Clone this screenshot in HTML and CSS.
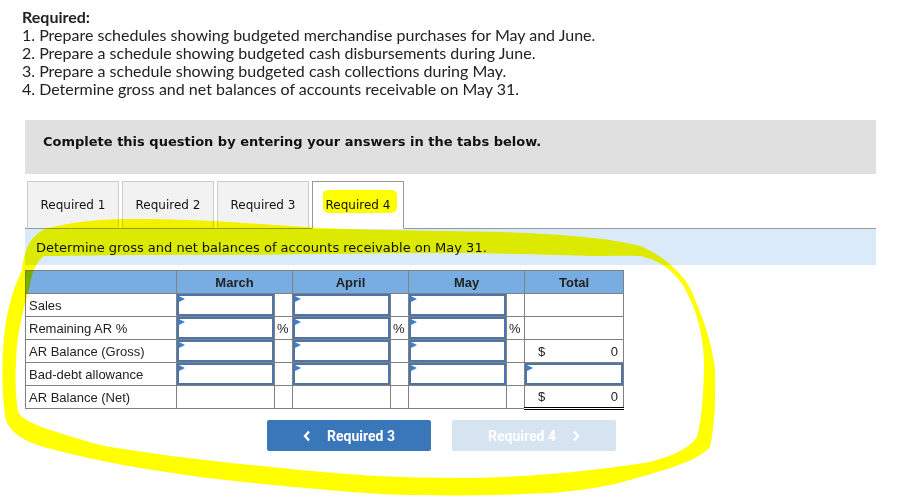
FILE: index.html
```html
<!DOCTYPE html>
<html lang="en">
  <head>
    <meta charset="UTF-8" />
    <title>Required 4</title>
    <link rel="stylesheet" href="styles.css">
  </head>
  <body>
    <div class="intro">
      <p class="intro-title">Required:</p>
      <p>1. Prepare schedules showing budgeted merchandise purchases for May and June.</p>
      <p>2. Prepare a schedule showing budgeted cash disbursements during June.</p>
      <p>3. Prepare a schedule showing budgeted cash collections during May.</p>
      <p>4. Determine gross and net balances of accounts receivable on May 31.</p>
    </div>

    <div class="question">
      <div class="notice">Complete this question by entering your answers in the tabs below.</div>

      <ul class="tabs">
        <li class="tab">Required 1</li>
        <li class="tab">Required 2</li>
        <li class="tab">Required 3</li>
        <li class="tab active">Required 4</li>
      </ul>

      <div class="prompt">Determine gross and net balances of accounts receivable on May 31.</div>

      <table class="ar-table">
        <colgroup>
          <col class="c-label" />
          <col class="c-input" /><col class="c-pct" />
          <col class="c-input" /><col class="c-pct" />
          <col class="c-input" /><col class="c-pct" />
          <col class="c-total" />
        </colgroup>
        <thead>
          <tr>
            <th></th>
            <th colspan="2">March</th>
            <th colspan="2">April</th>
            <th colspan="2">May</th>
            <th>Total</th>
          </tr>
        </thead>
        <tbody>
          <tr>
            <td class="label">Sales</td>
            <td class="entry"><span class="box"></span></td><td></td>
            <td class="entry"><span class="box"></span></td><td></td>
            <td class="entry"><span class="box"></span></td><td></td>
            <td></td>
          </tr>
          <tr>
            <td class="label">Remaining AR %</td>
            <td class="entry"><span class="box"></span></td><td class="pct">%</td>
            <td class="entry"><span class="box"></span></td><td class="pct">%</td>
            <td class="entry"><span class="box"></span></td><td class="pct">%</td>
            <td></td>
          </tr>
          <tr>
            <td class="label">AR Balance (Gross)</td>
            <td class="entry"><span class="box"></span></td><td></td>
            <td class="entry"><span class="box"></span></td><td></td>
            <td class="entry"><span class="box"></span></td><td></td>
            <td class="money"><span>$</span><span>0</span></td>
          </tr>
          <tr>
            <td class="label">Bad-debt allowance</td>
            <td class="entry"><span class="box"></span></td><td></td>
            <td class="entry"><span class="box"></span></td><td></td>
            <td class="entry"><span class="box"></span></td><td></td>
            <td class="entry"><span class="box"></span></td>
          </tr>
          <tr>
            <td class="label">AR Balance (Net)</td>
            <td></td><td></td>
            <td></td><td></td>
            <td></td><td></td>
            <td class="money net"><span>$</span><span>0</span></td>
          </tr>
        </tbody>
      </table>

      <div class="nav">
        <button class="nav-btn prev">
          <svg class="chev" width="8" height="12" viewBox="0 0 8 12"><polyline points="6,1.5 2,6 6,10.5" /></svg>
          Required 3
        </button>
        <button class="nav-btn next" disabled>
          Required 4
          <svg class="chev" width="8" height="12" viewBox="0 0 8 12"><polyline points="2,1.5 6,6 2,10.5" /></svg>
        </button>
      </div>
    </div>

    <!-- highlighter marks drawn over the page -->
    <svg class="marker" width="924" height="502" viewBox="0 0 924 502">
      <path d="M323 193 Q324 190 330 190 L392 190 Q398 191 397 197 L397 208 Q396 213 390 213 L330 213 Q323 213 323 207 Z" />
      <path fill-rule="evenodd" d="
        M22 270 C24 250 30 236 45 229 C70 222 100 219 130 219 C200 219 260 224 320 228
        C400 231 460 231 500 232 C560 234 610 238 640 246 C660 254 680 270 690 288
        C700 310 712 340 715 370 C716 400 714 430 710 447 C700 458 680 466 640 477
        C620 483 600 489 550 493 C480 496 420 496 380 494 C320 490 260 484 200 477
        C150 470 100 462 55 450 C30 444 12 436 6 420 C2 400 2 370 3 350 C5 320 10 295 22 270 Z
        M44 256 C36 262 32 272 30 285 C26 300 20 320 17 345 C15 370 15 395 18 412
        C24 422 40 428 100 445 C160 456 230 463 300 470 C350 475 400 478 460 478
        C530 478 600 470 650 462 C675 455 690 448 697 437 C702 420 704 390 704 360
        C703 335 697 310 684 287 C672 268 658 260 640 256 C620 255 600 257 560 255
        C500 253 450 253 400 253 C330 254 250 255 150 255 C100 255 70 256 44 256 Z" />
    </svg>
  </body>
</html>
```

FILE: styles.css
```css
* {
  box-sizing: border-box;
  margin: 0;
  padding: 0;
}

body {
  position: relative;
  width: 924px;
  height: 502px;
  overflow: hidden;
  background: #fff;
  font-family: "Lato", "Open Sans", sans-serif;
  color: #222;
}

.intro {
  padding: 8px 0 0 22px;
  font-size: 16px;
  line-height: 18px;
}

.intro-title {
  font-weight: bold;
}

.question {
  width: 851px;
  margin: 22px 0 0 25px;
  font-family: "DejaVu Sans", Verdana, sans-serif;
}

.notice {
  height: 54px;
  padding: 14px 0 0 18px;
  background: #e0e0e0;
  font-size: 13px;
  line-height: 16px;
  font-weight: bold;
  color: #111;
}

.tabs {
  display: flex;
  gap: 3px;
  list-style: none;
  margin-top: 7px;
  padding-left: 2px;
  border-bottom: 1px solid #999;
}

.tab {
  width: 92px;
  height: 48px;
  margin-bottom: -1px;
  display: flex;
  align-items: center;
  justify-content: center;
  background: #f2f2f2;
  border: 1px solid #ccc;
  border-bottom-color: #999;
  font-size: 12px;
  color: #111;
}

.tab.active {
  background: #fff;
  border-color: #999;
  border-bottom-color: #fff;
}

.prompt {
  height: 36px;
  padding-left: 11px;
  display: flex;
  align-items: center;
  background: #dbeaf8;
  font-size: 13px;
  color: #111;
}

.ar-table {
  margin-top: 5px;
  border-collapse: collapse;
  table-layout: fixed;
  width: 599px;
  font-family: "Liberation Sans", Arial, sans-serif;
  font-size: 13px;
  color: #222;
}

.c-label { width: 151px; }
.c-input { width: 98px; }
.c-pct { width: 18px; }
.c-total { width: 99px; }

.ar-table th,
.ar-table td {
  height: 23px;
  border: 1px solid #808080;
  padding: 0;
}

.ar-table th {
  background: #78ade3;
  font-weight: bold;
  color: #222;
}

.ar-table td.label {
  padding-left: 3px;
}

.ar-table td.pct {
  padding-left: 2px;
}

.entry {
  position: relative;
}

.box {
  position: absolute;
  inset: 0;
  border: 2px solid #4e74a8;
}

.box::before {
  content: "";
  position: absolute;
  left: 0;
  top: 0;
  border-left: 6px solid #3f7fcf;
  border-top: 3px solid transparent;
  border-bottom: 3px solid transparent;
}

.money {
  padding: 0 5px 0 13px !important;
}

.money span:last-child {
  float: right;
}

.money.net {
  border-top: 1px solid #000;
  border-bottom: 3px double #000;
}

.nav {
  display: flex;
  gap: 21px;
  margin: 10px 0 0 242px;
}

.nav-btn {
  width: 164px;
  height: 31px;
  border: none;
  border-radius: 2px;
  display: flex;
  align-items: center;
  justify-content: center;
  gap: 16px;
  font-family: "Roboto", sans-serif;
  font-size: 14px;
  font-weight: bold;
  color: #fff;
}

.nav-btn.prev {
  background: #3a76ba;
}

.nav-btn.next {
  background: #d6e3f0;
}

.chev polyline {
  fill: none;
  stroke: #fff;
  stroke-width: 2.4;
}

.marker {
  position: absolute;
  left: 0;
  top: 0;
  pointer-events: none;
  mix-blend-mode: multiply;
}

.marker path {
  fill: #ffff00;
}
```
